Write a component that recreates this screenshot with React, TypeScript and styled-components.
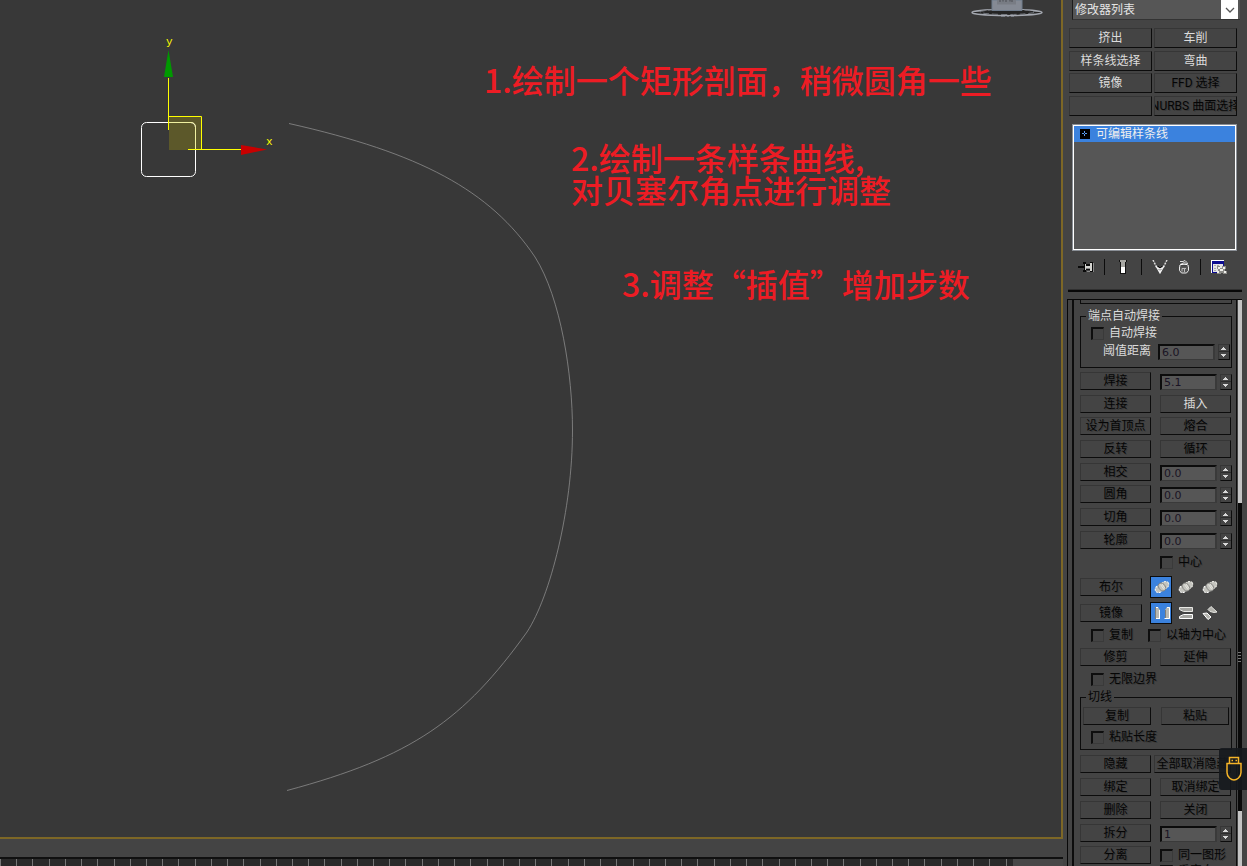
import React from "react";
import styled, { createGlobalStyle, css } from "styled-components";

const Global = createGlobalStyle`
  *, *::before, *::after { box-sizing: border-box; }
  html, body { margin: 0; background: #444; }
  body, button, input, select {
    font-family: Roboto, "Noto Sans CJK SC", sans-serif;
    font-size: 12px;
    line-height: 14px;
    color: #dcdcdc;
  }
`;

const Page = styled.div`
  display: flex;
  height: 100vh;
  overflow: hidden;
  background: #444;
`;

const Workspace = styled.main`
  flex: 1;
  min-width: 0;
  display: flex;
  flex-direction: column;
`;

const Viewport = styled.section`
  position: relative;
  flex: 1;
  overflow: hidden;
  background: #383838;
  border: solid #7d6726;
  border-width: 0 2px 2px 0;
`;

const Scene = styled.svg`
  position: absolute;
  left: 0;
  top: 0;
`;

const ViewCube = styled.svg`
  position: absolute;
  right: 16px;
  top: 0;
`;

const Note = styled.p<{ $x: number; $y: number }>`
  position: absolute;
  left: ${(p) => p.$x}px;
  top: ${(p) => p.$y}px;
  margin: 0;
  font-family: "Noto Sans CJK SC", sans-serif;
  font-size: 32px;
  line-height: 32px;
  font-weight: 500;
  white-space: nowrap;
  color: #ed1c24;
`;

const Timeline = styled.footer`
  height: 27px;
  padding-top: 18px;
`;

const Ruler = styled.div`
  display: flex;
  height: 9px;
  border-top: 2px solid #101010;
  background: #484848;
`;

const Ticks = styled.div`
  display: flex;
  width: 95.3%;
  background: #2a2a2a;
`;

const Tick = styled.span`
  flex: 1;
  border-left: 1px solid #777;

  &:last-child {
    flex: 0 0 7px;
  }
`;

const Panel = styled.aside`
  width: 184px;
  flex: none;
  display: flex;
  flex-direction: column;
`;

const ModifierList = styled.div`
  display: flex;
  height: 20px;
  margin: 0 7px 8px 9px;
  padding-right: 2px;
  background: #565656;
  border-left: 1px solid #1c1c1c;
  border-bottom: 1px solid #333;
`;

const ModifierSelect = styled.select`
  flex: 1;
  min-width: 0;
  height: 19px;
  padding: 0 0 0 2px;
  border: 0;
  appearance: none;
  background: #565656;
  color: #e4e4e4;
`;

const DropArrow = styled.svg`
  width: 17px;
  height: 19px;
  background: #fff;
`;

const bevel = css`
  border: 1px solid;
  border-color: #363636 #0c0c0c #0c0c0c #363636;
`;

const ModifierGrid = styled.div`
  display: grid;
  grid-template-columns: 1fr 1fr;
  grid-auto-rows: 23px 22px 23px;
  column-gap: 2px;
  padding: 0 10px 0 6px;
  height: 96px;
`;

const PushButton = styled.button<{ $tall?: boolean; $dim?: boolean; $width?: number }>`
  ${bevel}
  display: flex;
  align-items: center;
  justify-content: center;
  width: ${(p) => (p.$width ? p.$width + "px" : "100%")};
  height: ${(p) => (p.$tall ? 20 : 18)}px;
  flex: none;
  padding: 0;
  overflow: hidden;
  white-space: nowrap;
  background: #444;
  color: ${(p) => (p.$dim ? "#050505" : "#dcdcdc")};
  text-shadow: ${(p) => (p.$dim ? "1px 1px #383838" : "none")};
`;

const StackList = styled.ul`
  height: 127px;
  margin: 0 10px 0 9px;
  padding: 1px;
  list-style: none;
  background: #565656;
  border: 1px solid #8a8f96;
  box-shadow: inset 0 0 0 1px #fff;
`;

const StackItem = styled.li`
  display: flex;
  align-items: center;
  gap: 6px;
  height: 16px;
  padding-left: 6px;
  background: #3b82de;
  color: #eee;
`;

const StackTools = styled.div`
  display: flex;
  align-items: center;
  gap: 10px;
  height: 16px;
  margin: 8px 16px 14px 15px;
`;

const ToolButton = styled.button<{ $pad?: number }>`
  display: flex;
  padding: 0 ${(p) => p.$pad ?? 0}px;
  border: 0;
  background: none;
`;

const Separator = styled.span`
  width: 1px;
  height: 16px;
  background: #0c0c0c;
`;

const PanelRule = styled.hr`
  width: 174px;
  height: 3px;
  margin: 0 5px 7px;
  border: 0;
  border-top: 1px solid #303030;
  background: #080808;
`;

const Rollout = styled.div`
  flex: 1;
  min-height: 0;
  display: flex;
  margin: 0 5px 0 4px;
  border: solid #080808;
  border-width: 1px 0 0 1px;
`;

const RolloutBody = styled.div`
  flex: 1;
  min-width: 0;
  margin: 0 1px 0 4px;
  padding: 0 4px 0 6px;
  overflow: hidden;
  border: solid #0c0c0c;
  border-width: 0 1px 0 2px;
`;

const ScrollTrack = styled.div`
  display: flex;
  flex-direction: column;
  width: 4px;
  background: #0a0a0a;
`;

const ScrollEdge = styled.span<{ $grow: number }>`
  flex: ${(p) => p.$grow};
  background: #c4c4c4;
`;

const ScrollGap = styled.span`
  flex: 308;
  display: flex;
  align-items: center;
`;

const PreviousGroup = styled.div`
  height: 4px;
  border: 1px solid #0c0c0c;
  border-top: 0;
`;

const Group = styled.fieldset<{ $top: number; $dim?: boolean }>`
  min-width: 0;
  margin: ${(p) => p.$top}px 0 0;
  padding: 0 0 ${(p) => (p.$dim ? 3 : 6)}px;
  border: 1px solid #0c0c0c;
  color: ${(p) => (p.$dim ? "#050505" : "#dcdcdc")};
`;

const Legend = styled.legend`
  margin-left: 5px;
  padding: 0 2px;
  line-height: 14px;
`;

const Grid = styled.div<{ $rows: string; $top: number }>`
  display: grid;
  grid-template-columns: 71px 71px;
  grid-auto-rows: ${(p) => p.$rows};
  column-gap: 9px;
  margin-top: ${(p) => p.$top}px;
`;

const Line = styled.div<{ $top?: number; $height?: number; $pad?: string }>`
  display: flex;
  align-items: center;
  height: ${(p) => p.$height ?? 18}px;
  margin-top: ${(p) => p.$top ?? 0}px;
  padding: ${(p) => p.$pad ?? "0"};
`;

const Spread = styled(Line)`
  justify-content: space-between;
`;

const WideCell = styled.div`
  margin-left: -6px;
`;

const CheckLabel = styled.label<{ $dim?: boolean }>`
  display: flex;
  align-items: center;
  gap: 5px;
  height: 18px;
  white-space: nowrap;
  color: ${(p) => (p.$dim ? "#050505" : "#dcdcdc")};
  text-shadow: ${(p) => (p.$dim ? "1px 1px #383838" : "none")};
`;

const CheckBox = styled.input`
  appearance: none;
  flex: none;
  width: 13px;
  height: 13px;
  margin: 0;
  background: #444;
  border: solid;
  border-width: 2px 1px 1px 2px;
  border-color: #0e0e0e #3a3a3a #3a3a3a #0e0e0e;
`;

const SpinField = styled.div`
  display: flex;
  align-items: flex-end;
  gap: 3px;
  height: 18px;
`;

const ValueInput = styled.input`
  flex: none;
  width: 57px;
  height: 16px;
  padding: 0 0 0 2px;
  border: solid;
  border-width: 2px 2px 1px 2px;
  border-color: #0c0c0c #3a3a3a #3a3a3a #0c0c0c;
  background: #565656;
  color: #1a1424;
  font-family: "DejaVu Sans", sans-serif;
  font-size: 11px;
  line-height: 13px;
`;

const SpinArrows = styled.button`
  ${bevel}
  display: flex;
  flex: none;
  width: 12px;
  height: 16px;
  padding: 0;
  background: #444;
`;

const ModeGroup = styled.div`
  display: flex;
  gap: 2px;
  margin-left: 8px;
`;

const ModeButton = styled.button<{ $on?: boolean }>`
  display: flex;
  align-items: center;
  justify-content: center;
  width: 22px;
  height: 22px;
  padding: 0 0 0 2px;
  background: ${(p) => (p.$on ? "#3b82de" : "none")};
  border: ${(p) => (p.$on ? "1px solid #0c0c0c" : "0")};
`;

const DeviceBadge = styled.div`
  position: fixed;
  right: 0;
  top: 748px;
  display: flex;
  align-items: center;
  justify-content: center;
  width: 28px;
  height: 42px;
  padding-left: 2px;
  border-radius: 3px 0 0 3px;
  background: rgba(22, 25, 29, 0.93);
`;

function Arrows() {
  return (
    <svg width="10" height="14" viewBox="0 0 10 14" shapeRendering="crispEdges">
      <path d="M2 5h5v-1h-1v-1h-1v-1h-1v1h-1v1h-1z" fill="#d8d8d8" />
      <path d="M2 9h5v1h-1v1h-1v1h-1v-1h-1v-1h-1z" fill="#d8d8d8" />
      <path d="M0 6h10v1h-10z" fill="#2c2c2c" />
    </svg>
  );
}

function Spinner({ name, value }: { name: string; value: string }) {
  return (
    <SpinField>
      <ValueInput aria-label={name} defaultValue={value} />
      <SpinArrows aria-label={name + " ±"}>
        <Arrows />
      </SpinArrows>
    </SpinField>
  );
}

function Check({ text, dim }: { text: string; dim?: boolean }) {
  return (
    <CheckLabel $dim={dim}>
      <CheckBox type="checkbox" />
      {text}
    </CheckLabel>
  );
}

function BooleanIcon() {
  return (
    <svg width="16" height="14" viewBox="0 0 16 14">
      <ellipse cx="5" cy="9" rx="4" ry="3.4" transform="rotate(-35 5 9)" fill="#c4c4be" stroke="#fff" strokeDasharray="2 1" />
      <ellipse cx="11" cy="5" rx="4" ry="3.4" transform="rotate(-35 11 5)" fill="#c4c4be" stroke="#efefe9" strokeDasharray="2 1" />
      <ellipse cx="8" cy="7" rx="3.2" ry="4.4" transform="rotate(-30 8 7)" fill="#c4c4be" stroke="#7c7c78" strokeWidth="0.8" />
      <path d="M6.500 4.500l3.500 5M8 4l3 4.500" stroke="#f0f0ea" strokeWidth="0.8" />
    </svg>
  );
}

function MirrorIcon({ kind }: { kind: "h" | "v" | "both" }) {
  if (kind === "h")
    return (
      <svg width="17" height="14" viewBox="0 0 17 14">
        <path d="M1 1h3l2 3v9h-5z" fill="#b8b8b2" />
        <path d="M1 1.500h3M5.500 4v9M1 12.500h5" stroke="#fff" fill="none" />
        <path d="M1.500 1v12" stroke="#7c7c78" />
        <path d="M16 1h-3l-2 3v9h5z" fill="#b8b8b2" />
        <path d="M13 1.500h2.500v11h-5" stroke="#fff" fill="none" />
        <path d="M11.500 4v8" stroke="#7c7c78" />
      </svg>
    );
  if (kind === "v")
    return (
      <svg width="16" height="14" viewBox="0 0 16 14">
        <path d="M1.500 1.500h13v4h-9l-4-2z" fill="#a4a4a0" stroke="#e8e8e4" />
        <path d="M14.500 12.500h-13v-2l4-2h9z" fill="#a4a4a0" stroke="#fff" />
      </svg>
    );
  return (
    <svg width="16" height="14" viewBox="0 0 16 14">
      <path d="M6 3.500l3-3 6 5.500-3 .5-4-1z" fill="#b4b4ae" stroke="#e4e4e0" />
      <path d="M1 7.500l4-.5 4 4-3 2.500z" fill="#b4b4ae" stroke="#fff" />
    </svg>
  );
}

function SceneDrawing() {
  return (
    <Scene width="620" height="837" viewBox="0 0 620 837">
      <path
        d="M289 123.500C420 153 490 190 535 257C561 298 572.500 375 572.500 430C572.500 510 550 597 527 632C464 720 412 757 287 790.500"
        fill="none"
        stroke="#8c8c8c"
        strokeWidth="0.8"
      />
      <rect x="169" y="117" width="32" height="33" fill="#5c582a" />
      <rect x="141.500" y="122.500" width="54" height="54" rx="5" fill="none" stroke="#fff" />
      <path d="M169 122.500h22q4.500 0 4.500 5V149" fill="none" stroke="#f0f0a0" />
      <path d="M168.500 78v52M168.500 116.500h33v33M188 149.500h54" fill="none" stroke="#ff0" />
      <path d="M168.500 50l4.500 27h-9z" fill="#090" />
      <path d="M241 145v10l26-5.500z" fill="#c80000" />
      <g fill="#ff0" fontFamily="Liberation Mono, monospace" fontSize="11">
        <text x="166" y="45">y</text>
        <text x="266" y="145">x</text>
      </g>
    </Scene>
  );
}

function Cube() {
  return (
    <ViewCube width="76" height="20" viewBox="0 0 76 20">
      <ellipse cx="38" cy="12.500" rx="35" ry="3" fill="#242424" stroke="#a4a8b0" strokeWidth="1.500" />
      <ellipse cx="38" cy="12" rx="27" ry="2.500" fill="#242424" stroke="#777b82" strokeDasharray="6 3" />
      <path d="M23 0h30v10.500h-30z" fill="#858a94" stroke="#6f7c8c" />
      <path d="M28 0h19v4.500h-19z" fill="#787c84" />
      <path d="M31 0v2M34 0v1.500M37 0v2M41 0v1.500M43 0v2" stroke="#4a4c52" />
      <path d="M32 16.500h4M38 16.500h2M42 16.500h3" stroke="#787c84" />
    </ViewCube>
  );
}

function PinIcon() {
  return (
    <svg width="16" height="12" viewBox="0 0 16 12" shapeRendering="crispEdges">
      <path d="M0 5h6v2h-6z" fill="#0a0a0a" />
      <path d="M5 1h3v2h4v-2h3v10h-3v-2h-4v2h-3v-2h1v-6h-1z" fill="#0a0a0a" />
      <path d="M7 3h1v6h-1zM12 2h2v8h-2zM8 5h4v2h-4z" fill="#d4d4d0" />
      <path d="M8 7h4v1h-4zM15 2h1v9h-1zM9 10h3v1h-3z" fill="#888" />
    </svg>
  );
}

function TubeIcon() {
  return (
    <svg width="8" height="14" viewBox="0 0 8 14" shapeRendering="crispEdges">
      <path d="M0 0h8v2h-1v12h-6v-12h-1z" fill="#111" />
      <path d="M1 0h6v2h-1v5h-4v-5h-1z" fill="#a8a8a4" />
      <path d="M2 7h4v6h-4z" fill="#fff" />
    </svg>
  );
}

function UniqueIcon() {
  return (
    <svg width="16" height="14" viewBox="0 0 16 14" fill="none">
      <path d="M1 0l4 8M15 0l-4 8" stroke="#ddd" strokeWidth="1.500" strokeDasharray="2 1" />
      <path d="M4 6l4 7 4-7M4 7l4 2 4-2M8 9v4" stroke="#f4f4f4" strokeWidth="1.200" />
      <path d="M6 6l2 2 2-2" stroke="#111" />
    </svg>
  );
}

function TrashIcon() {
  return (
    <svg width="12" height="14" viewBox="0 0 12 14" fill="none">
      <path d="M2 1.500h3l2-1 2 2M2 4.500q4-3 8-1" stroke="#ddd" />
      <ellipse cx="6" cy="6" rx="4.500" ry="1.800" stroke="#fff" />
      <path d="M1.500 6.500v4l2 2.500h5l2-2.500v-4" stroke="#e8e8e8" fill="#555" />
      <path d="M4 8.500v3M6.500 9v3M4 8.500h4" stroke="#bbb" />
    </svg>
  );
}

function ConfigIcon() {
  return (
    <svg width="16" height="15" viewBox="0 0 16 15" shapeRendering="crispEdges">
      <path d="M0 0h13v13h-13z" fill="#fff" />
      <path d="M1 1h12v12h-12z" fill="#0c0c90" />
      <path d="M2 4h10v8h-10z" fill="#e4e4e4" />
      <path d="M3 5h2v1h-2zM6 5h2v1h-2zM3 8h2v1h-2zM3 10h2v1h-2z" fill="#aaa" />
      <path d="M6 6h3v2h2v-2h4v3h-1v2h2v3h-4v-1h-2v1h-4v-3h1v-2h-1z" fill="#8c8c88" />
      <path d="M7 7h2v2h-2zM12 7h2v2h-2zM9 9h3v2h-3zM6 11h2v2h-2zM13 11h2v2h-2z" fill="#f0f0ec" />
    </svg>
  );
}

const modifiers: [string, boolean][] = [
  ["挤出", false],
  ["车削", false],
  ["样条线选择", false],
  ["弯曲", false],
  ["镜像", false],
  ["FFD 选择", true],
  ["", false],
  ["NURBS 曲面选择", true],
];

const ticks = Array.from({ length: 63 }, (_, i) => i);

export default function App() {
  return (
    <Page>
      <Global />
      <Workspace>
        <Viewport>
          <SceneDrawing />
          <Cube />
          <Note $x={484} $y={63}>1.绘制一个矩形剖面，稍微圆角一些</Note>
          <Note $x={571} $y={141}>
            2.绘制一条样条曲线,
            <br />
            对贝塞尔角点进行调整
          </Note>
          <Note $x={622} $y={267}>3.调整“插值”增加步数</Note>
        </Viewport>
        <Timeline>
          <Ruler>
            <Ticks>
              {ticks.map((t) => (
                <Tick key={t} />
              ))}
            </Ticks>
          </Ruler>
        </Timeline>
      </Workspace>

      <Panel>
        <ModifierList>
          <ModifierSelect aria-label="修改器列表">
            <option>修改器列表</option>
          </ModifierSelect>
          <DropArrow viewBox="0 0 17 19">
            <path d="M5 8l4 4 4-4" fill="none" stroke="#555" strokeWidth="1.300" />
          </DropArrow>
        </ModifierList>

        <ModifierGrid>
          {modifiers.map(([text, dim], i) => (
            <PushButton key={i} $tall $dim={dim}>
              {text}
            </PushButton>
          ))}
        </ModifierGrid>

        <StackList>
          <StackItem>
            <svg width="10" height="10" viewBox="0 0 10 10" shapeRendering="crispEdges">
              <path d="M0 0h10v10h-10z" fill="#000" />
              <path d="M2 5h5v-1h-5zM4 2h1v5h-1z" fill="#5a9cf0" />
            </svg>
            可编辑样条线
          </StackItem>
        </StackList>

        <StackTools>
          <ToolButton aria-label="锁定堆栈"><PinIcon /></ToolButton>
          <Separator />
          <ToolButton $pad={4} aria-label="显示最终结果"><TubeIcon /></ToolButton>
          <Separator />
          <ToolButton aria-label="使唯一"><UniqueIcon /></ToolButton>
          <ToolButton aria-label="移除修改器"><TrashIcon /></ToolButton>
          <Separator />
          <ToolButton aria-label="配置修改器集"><ConfigIcon /></ToolButton>
        </StackTools>

        <PanelRule />

        <Rollout>
          <RolloutBody>
            <PreviousGroup />
            <Group $top={5}>
              <Legend>端点自动焊接</Legend>
              <Line $height={20} $pad="0 0 0 10px">
                <Check text="自动焊接" />
              </Line>
              <Spread $pad="0 1px 2px 22px">
                阈值距离
                <Spinner name="阈值距离" value="6.0" />
              </Spread>
            </Group>

            <Grid $rows="23px 22px 23px" $top={4}>
              <PushButton $dim>焊接</PushButton>
              <Spinner name="焊接" value="5.1" />
              <PushButton $dim>连接</PushButton>
              <PushButton>插入</PushButton>
              <PushButton $dim>设为首顶点</PushButton>
              <PushButton $dim>熔合</PushButton>
              <PushButton $dim>反转</PushButton>
              <PushButton $dim>循环</PushButton>
              <PushButton $dim>相交</PushButton>
              <Spinner name="相交" value="0.0" />
              <PushButton $dim>圆角</PushButton>
              <Spinner name="圆角" value="0.0" />
              <PushButton $dim>切角</PushButton>
              <Spinner name="切角" value="0.0" />
              <PushButton $dim>轮廓</PushButton>
              <Spinner name="轮廓" value="0.0" />
            </Grid>
            <Line $pad="0 0 0 80px">
              <Check dim text="中心" />
            </Line>

            <Line $top={5} $height={22}>
              <PushButton $dim $width={62}>布尔</PushButton>
              <ModeGroup>
                <ModeButton $on aria-label="并集"><BooleanIcon /></ModeButton>
                <ModeButton aria-label="差集"><BooleanIcon /></ModeButton>
                <ModeButton aria-label="交集"><BooleanIcon /></ModeButton>
              </ModeGroup>
            </Line>
            <Line $top={4} $height={22}>
              <PushButton $dim $width={62}>镜像</PushButton>
              <ModeGroup>
                <ModeButton $on aria-label="水平镜像"><MirrorIcon kind="h" /></ModeButton>
                <ModeButton aria-label="垂直镜像"><MirrorIcon kind="v" /></ModeButton>
                <ModeButton aria-label="双向镜像"><MirrorIcon kind="both" /></ModeButton>
              </ModeGroup>
            </Line>
            <Spread $top={2} $pad="0 6px 0 11px">
              <Check dim text="复制" />
              <Check dim text="以轴为中心" />
            </Spread>

            <Grid $rows="18px" $top={4}>
              <PushButton $dim>修剪</PushButton>
              <PushButton $dim>延伸</PushButton>
            </Grid>
            <Line $top={4} $pad="0 0 0 11px">
              <Check dim text="无限边界" />
            </Line>

            <Group $top={2} $dim>
              <Legend>切线</Legend>
              <Spread $top={3} $pad="0 2px">
                <PushButton $dim $width={68}>复制</PushButton>
                <PushButton $dim $width={68}>粘贴</PushButton>
              </Spread>
              <Line $top={3} $pad="0 0 0 10px">
                <Check dim text="粘贴长度" />
              </Line>
            </Group>

            <Grid $rows="23px 23px 23px 22px 16px" $top={5}>
              <PushButton $dim>隐藏</PushButton>
              <WideCell>
                <PushButton $dim>全部取消隐藏</PushButton>
              </WideCell>
              <PushButton $dim>绑定</PushButton>
              <PushButton $dim>取消绑定</PushButton>
              <PushButton $dim>删除</PushButton>
              <PushButton $dim>关闭</PushButton>
              <PushButton $dim>拆分</PushButton>
              <Spinner name="拆分" value="1" />
              <PushButton $dim>分离</PushButton>
              <Check dim text="同一图形" />
            </Grid>
            <Line $pad="0 0 0 80px">
              <Check dim text="重定向" />
            </Line>
          </RolloutBody>

          <ScrollTrack>
            <ScrollEdge $grow={203} />
            <ScrollGap>
              <svg width="4" height="10" viewBox="0 0 4 10">
                <path d="M0 .5h3M0 3.500h3M0 6.500h3M0 9.500h3" stroke="#777" />
              </svg>
            </ScrollGap>
            <ScrollEdge $grow={55} />
          </ScrollTrack>
        </Rollout>
      </Panel>

      <DeviceBadge>
        <svg width="16" height="26" viewBox="0 0 16 26" fill="none" stroke="#f5b428" strokeWidth="1.500">
          <path d="M3.500 7V1.500h9V7" />
          <path d="M1 7.500h14v9q0 3-2.500 5.500-4.500 4-9 0Q1 19.500 1 16.500z" />
          <path d="M5.500 4.500h1.500M9.500 4.500h1.500" />
        </svg>
      </DeviceBadge>
    </Page>
  );
}
